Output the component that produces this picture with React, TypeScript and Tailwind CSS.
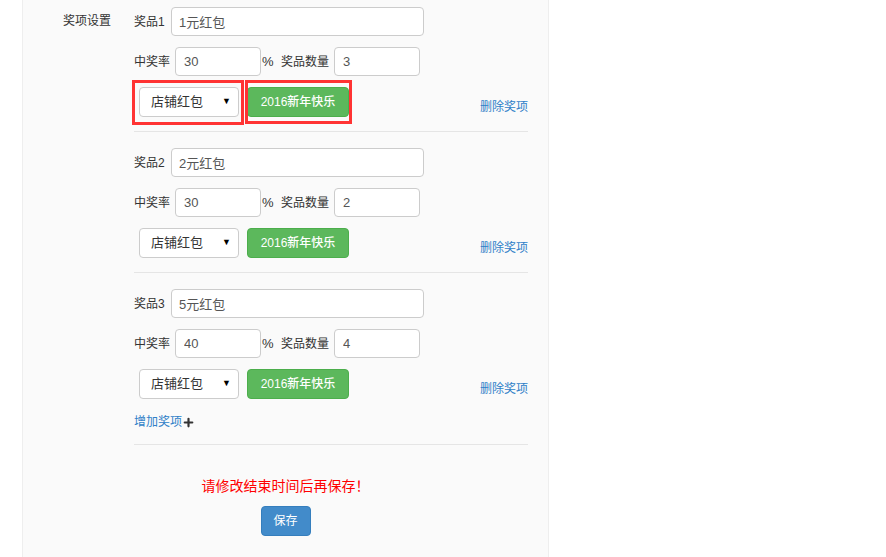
import { Plus } from "lucide-react";

type Prize = { name: string; rate: string; count: string };

const prizes: Prize[] = [
  { name: "1元红包", rate: "30", count: "3" },
  { name: "2元红包", rate: "30", count: "2" },
  { name: "5元红包", rate: "40", count: "4" },
];

/* ── One prize block ─────────────────────────────────────── */
function PrizeGroup({ index, prize, marked, last }: { index: number; prize: Prize; marked: boolean; last: boolean }) {
  return (
    <div className={`${index === 0 ? "" : "pt-[16px]"} ${last ? "" : "border-b border-[#e5e5e5] pb-[14px]"}`}>
      <div className="flex items-center h-[29px]">
        <span className="w-[37px] text-[12px] text-[#333]">奖品{index + 1}</span>
        <input
          defaultValue={prize.name}
          className="w-[253px] h-[29px] rounded-[4px] border border-[#ccc] bg-white px-[7px] text-[13px] text-[#555] outline-none"
        />
      </div>

      <div className="mt-[11px] flex items-center h-[29px] text-[12px] text-[#333]">
        <span className="w-[41px]">中奖率</span>
        <input
          defaultValue={prize.rate}
          className="w-[86px] h-[29px] rounded-[4px] border border-[#ccc] bg-white px-[8px] text-[13px] text-[#555] outline-none"
        />
        <span className="ml-[1px] w-[19px] text-[13px]">%</span>
        <span className="w-[53px]">奖品数量</span>
        <input
          defaultValue={prize.count}
          className="w-[86px] h-[29px] rounded-[4px] border border-[#ccc] bg-white px-[8px] text-[13px] text-[#555] outline-none"
        />
      </div>

      <div className="relative mt-[11px] flex items-end justify-between">
        <div className="flex items-end">
          <div className="ml-[5px] flex h-[30px] w-[100px] items-center justify-between rounded-[4px] border border-[#ccc] bg-white pl-[11px] pr-[7px] text-[13px] text-[#333]">
            <span>店铺红包</span>
            <span className="text-[9px] text-black">▼</span>
          </div>
          <button className="ml-[8px] h-[30px] w-[102px] rounded-[4px] border border-[#4cae4c] bg-[#5cb85c] text-[12px] font-medium text-white">
            2016新年快乐
          </button>
        </div>
        <a className="mb-[3px] text-[12px] leading-[14px] text-[#2f7fc8]">删除奖项</a>

        {marked && (
          <>
            <div className="pointer-events-none absolute left-[-2px] top-[-7px] h-[45px] w-[112px] border-[3px] border-[#f33]" />
            <div className="pointer-events-none absolute left-[111px] top-[-7px] h-[44px] w-[107px] border-[3px] border-[#f33]" />
          </>
        )}
      </div>
    </div>
  );
}

/* ── Page ────────────────────────────────────────────────── */
export default function App() {
  return (
    <div
      className="h-[557px] w-[886px] overflow-hidden bg-white pl-[22px]"
      style={{ fontFamily: '"Liberation Sans", "Noto Sans CJK SC", sans-serif' }}
    >
      <div className="h-full w-[527px] border-l border-r border-[#eee] bg-[#fafafa] pt-[7px]">
        <div className="flex">
          <div className="w-[89px] pr-[1px] text-right text-[12px] leading-[29px] text-[#333]">奖项设置</div>
          <div className="ml-[22px] w-[394px]">
            {prizes.map((p, i) => (
              <PrizeGroup key={i} index={i} prize={p} marked={i === 0} last={i === prizes.length - 1} />
            ))}

            <div className="border-b border-[#e5e5e5] pb-[13px] pt-[14px]">
              <a className="flex h-[18px] items-center text-[12px] text-[#2f7fc8]">
                增加奖项
                <Plus size={13} strokeWidth={4} className="text-[#333]" />
              </a>
            </div>
          </div>
        </div>

        <div className="mt-[31px] flex flex-col items-center">
          <p className="text-[14px] leading-[18px] text-[#f00]" style={{ fontFamily: '"Noto Sans CJK SC", sans-serif' }}>
            请修改结束时间后再保存！
          </p>
          <button className="mt-[12px] h-[30px] w-[50px] rounded-[4px] border border-[#357ebd] bg-[#428bca] text-[12px] text-white">
            保存
          </button>
        </div>
      </div>
    </div>
  );
}
